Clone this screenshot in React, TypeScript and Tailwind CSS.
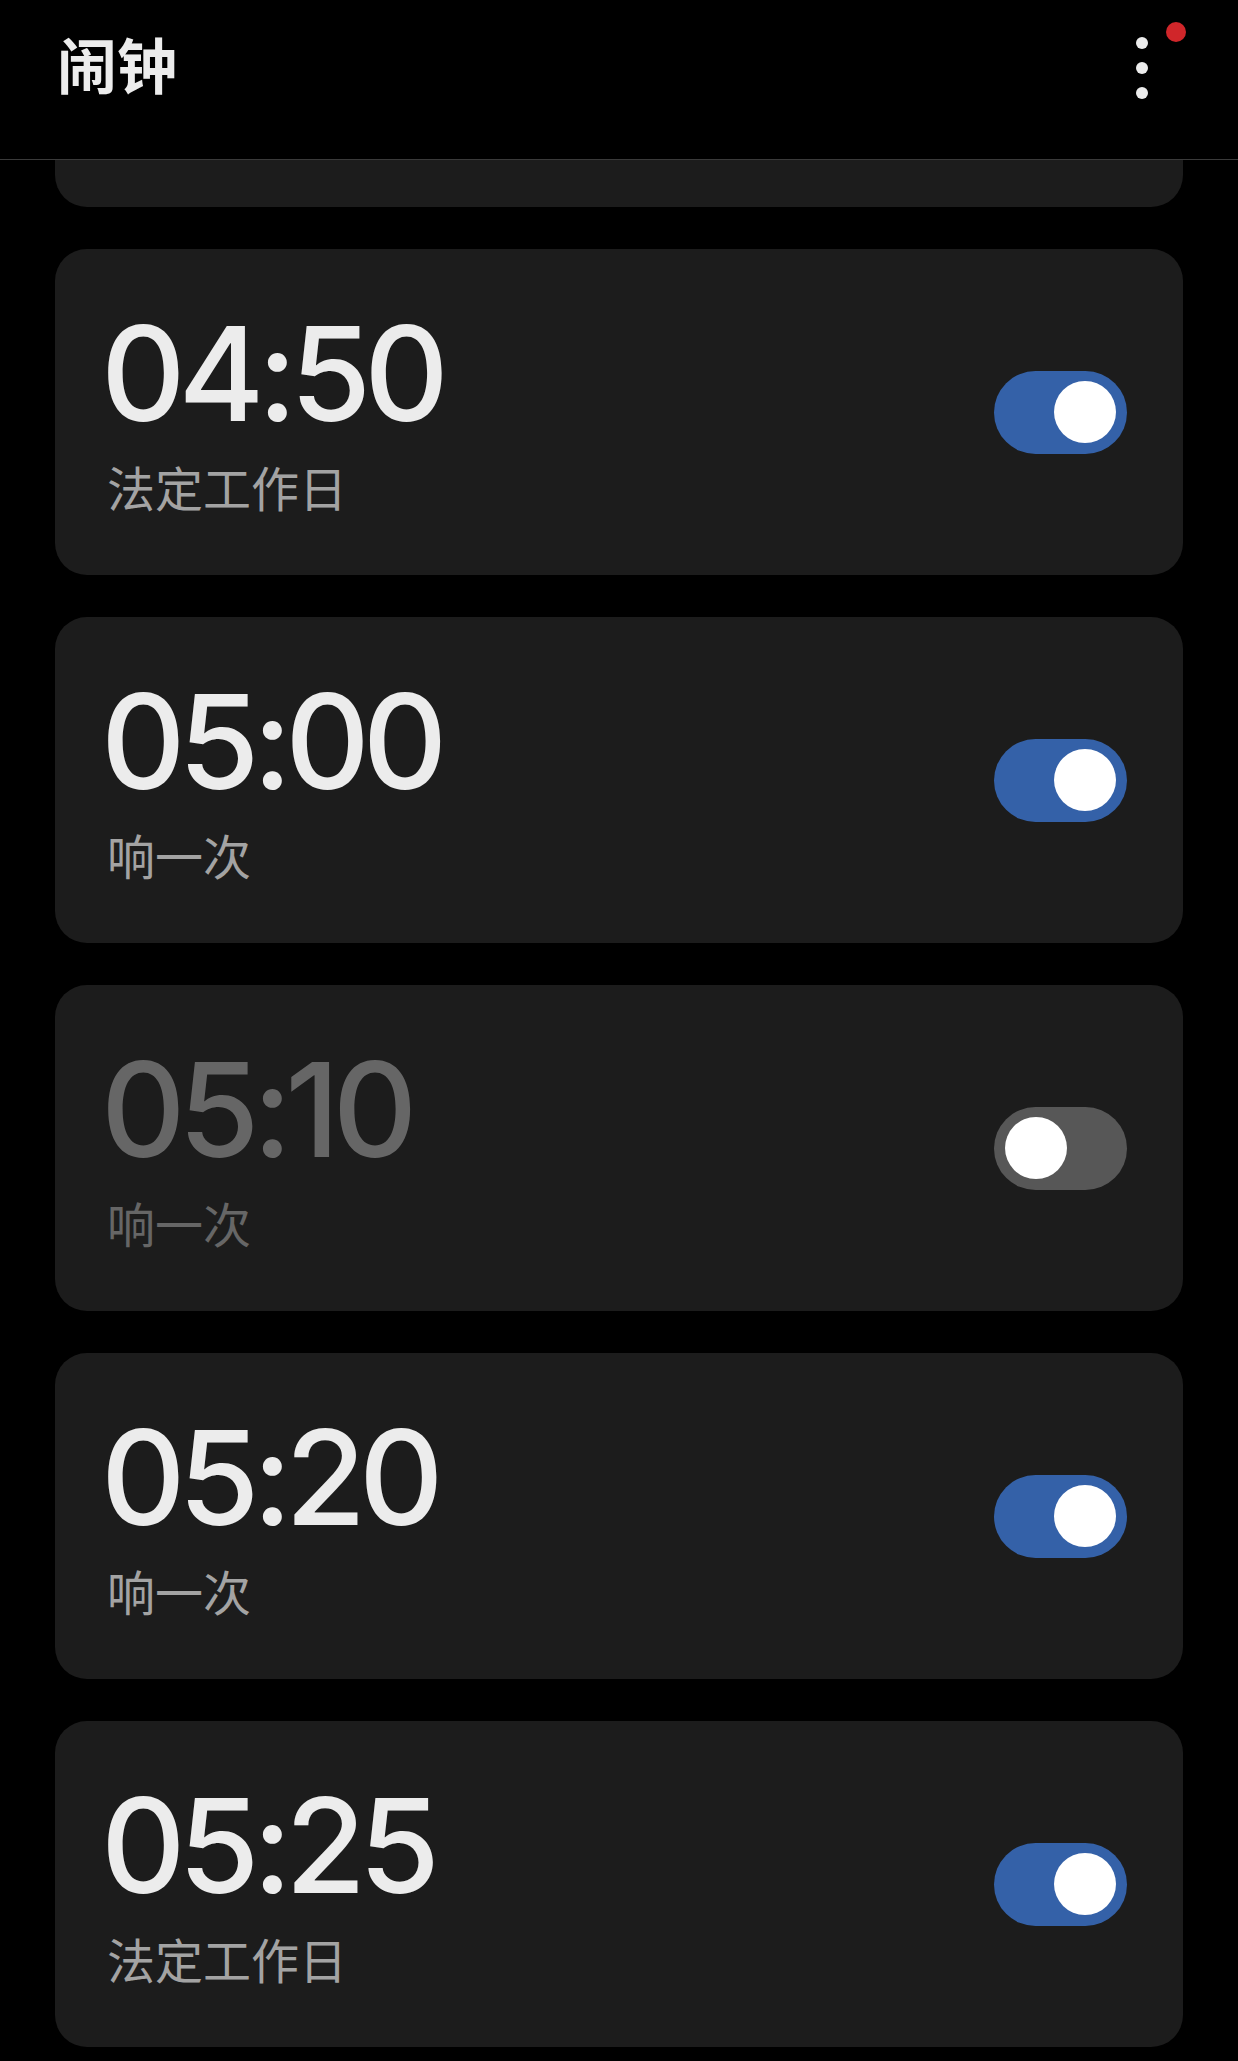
import React from 'react';

type Alarm = {
  time: string;
  label: string;
  on: boolean;
};

const alarms: Alarm[] = [
  { time: '04:50', label: '法定工作日', on: true },
  { time: '05:00', label: '响一次', on: true },
  { time: '05:10', label: '响一次', on: false },
  { time: '05:20', label: '响一次', on: true },
  { time: '05:25', label: '法定工作日', on: true },
];

const Toggle = ({ on }: { on: boolean }) => (
  <div
    className={
      'flex h-[83px] w-[133px] shrink-0 items-center rounded-full px-[11px] ' +
      (on ? 'justify-end bg-[#3461a8]' : 'justify-start bg-[#575757]')
    }
  >
    <div className="h-[62px] w-[62px] rounded-full bg-white" />
  </div>
);

const AlarmCard = ({ alarm }: { alarm: Alarm }) => (
  <div className="flex h-[326px] items-center justify-between rounded-[32px] bg-[#1c1c1c] pl-[46px] pr-[56px]">
    <div className="flex flex-col pb-[6px]">
      <div
        className={
          "font-['Inter',sans-serif] text-[131px] font-[460] leading-[1.1] tracking-[-7px] " +
          (alarm.on ? 'text-[#ececec]' : 'text-[#666666]')
        }
      >
        {alarm.time}
      </div>
      <div
        className={
          "ml-[6px] mt-[12px] font-['Noto_Sans_CJK_SC',sans-serif] text-[48px] leading-[1.2] " +
          (alarm.on ? 'text-[#a3a3a3]' : 'text-[#666666]')
        }
      >
        {alarm.label}
      </div>
    </div>
    <Toggle on={alarm.on} />
  </div>
);

export default function App() {
  return (
    <div className="min-h-[2061px] w-full bg-black">
      {/* Top bar */}
      <div className="flex h-[160px] items-start justify-between border-b border-[#3a3a3a] pl-[57px] pr-[54px]">
        <h1 className="mt-[33px] font-['Noto_Sans_CJK_SC',sans-serif] text-[60px] font-bold leading-none text-[#ececec]">
          闹钟
        </h1>
        <div className="relative mt-[37px] flex flex-col items-center gap-[13px] pr-[36px]">
          <span className="h-[12px] w-[12px] rounded-full bg-[#ececec]" />
          <span className="h-[12px] w-[12px] rounded-full bg-[#ececec]" />
          <span className="h-[12px] w-[12px] rounded-full bg-[#ececec]" />
          <span className="absolute right-[-2px] top-[-15px] h-[20px] w-[20px] rounded-full bg-[#d0262a]" />
        </div>
      </div>

      {/* Alarm list, scrolled so the first card is cut off */}
      <div className="flex flex-col gap-[42px] px-[55px]">
        <div className="h-[47px] rounded-b-[32px] bg-[#1c1c1c]" />
        {alarms.map((a) => (
          <AlarmCard key={a.time} alarm={a} />
        ))}
      </div>
    </div>
  );
}
